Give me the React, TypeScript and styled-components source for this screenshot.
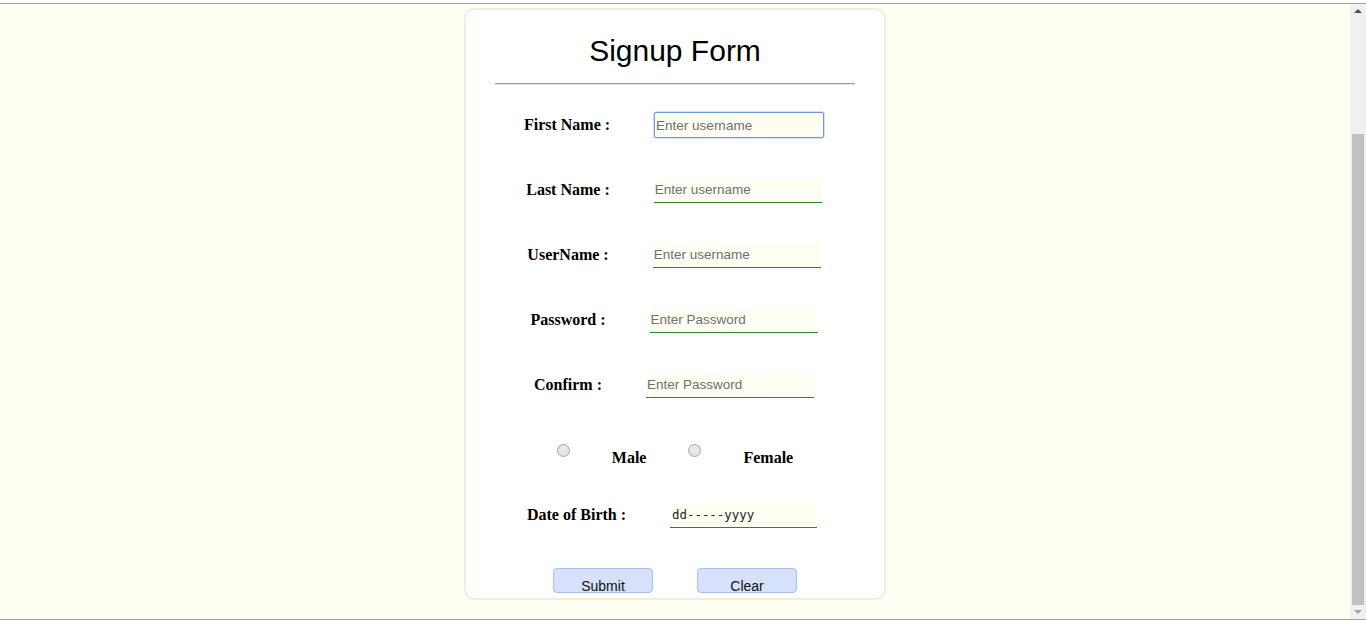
import React from "react";
import styled, { createGlobalStyle } from "styled-components";

const Global = createGlobalStyle`
  html, body { margin: 0; padding: 0; background: #ffffff; overflow: hidden; }
  * { box-sizing: border-box; }
`;

const Frame = styled.div`
  width: 1366px;
  height: 622px;
  display: flex;
  flex-direction: column;
  background: #ffffff;
`;

const Edge = styled.div<{ $top?: boolean }>`
  height: ${(p) => (p.$top ? "4px" : "3px")};
  background: #ffffff;
  border-${(p) => (p.$top ? "bottom" : "top")}: 1px solid #a3a3a3;
  flex: none;
`;

const Viewport = styled.div`
  flex: 1;
  display: flex;
  min-height: 0;
`;

const Page = styled.main`
  flex: 1;
  background: #fefef3;
  display: flex;
  justify-content: center;
  align-items: flex-start;
  padding-top: 4px;
`;

const Scrollbar = styled.div`
  width: 16px;
  flex: none;
  background: #f0f0f0;
  display: flex;
  flex-direction: column;
  align-items: center;
`;

const Arrow = styled.div<{ $down?: boolean }>`
  height: 14px;
  width: 100%;
  display: flex;
  align-items: center;
  justify-content: center;
  &::before {
    content: "";
    border-left: 4px solid transparent;
    border-right: 4px solid transparent;
    ${(p) =>
      p.$down
        ? "border-top: 4px solid #a3a3a3;"
        : "border-bottom: 4px solid #505050;"}
  }
`;

const TrackSpace = styled.div`
  flex: 1;
  width: 100%;
  display: flex;
  flex-direction: column;
  align-items: center;
  padding-top: 116px;
`;

const Thumb = styled.div`
  width: 12px;
  flex: 1;
  background: #c1c1c1;
`;

const Card = styled.section`
  width: 422px;
  height: 592px;
  background: #ffffff;
  border: 2px solid #f7ebe0;
  border-radius: 10px;
  display: flex;
  flex-direction: column;
  align-items: center;
  padding-top: 24px;
`;

const Title = styled.h1`
  margin: 0;
  font-family: "Liberation Sans", Arial, sans-serif;
  font-weight: normal;
  font-size: 30px;
  line-height: 34px;
  color: #000;
`;

const Rule = styled.hr`
  width: 360px;
  margin: 15px 0 0;
  border: none;
  border-top: 1px solid #9c9c9c;
  border-bottom: 1px solid #e4e4e4;
  height: 0;
`;

const Form = styled.form`
  margin-top: 27px;
  width: 100%;
  display: flex;
  flex-direction: column;
  gap: 39px;
`;

const Row = styled.div<{ $gap?: number; $top?: boolean; $shift?: number }>`
  height: 26px;
  display: flex;
  justify-content: center;
  align-items: ${(p) => (p.$top ? "flex-start" : "center")};
  gap: ${(p) => p.$gap ?? 44}px;
  padding-right: ${(p) => p.$shift ?? 0}px;
`;

const Label = styled.label<{ $offset?: number }>`
  font-family: "Liberation Serif", "Times New Roman", serif;
  font-weight: bold;
  font-size: 16px;
  line-height: 18px;
  color: #000;
  white-space: nowrap;
  margin-top: ${(p) => p.$offset ?? 0}px;
`;

const Field = styled.input<{ $focused?: boolean; $w?: number }>`
  width: ${(p) => (p.$focused ? 170 : p.$w ?? 168)}px;
  height: ${(p) => (p.$focused ? 26 : 25)}px;
  margin: 0;
  padding: 0 1px;
  background: #fefef3;
  font-family: "Liberation Sans", Arial, sans-serif;
  font-size: 13.5px;
  color: #222;
  outline: none;
  border: none;
  border-radius: ${(p) => (p.$focused ? "2px" : "0")};
  ${(p) =>
    p.$focused
      ? "border: 1px solid #6c9bd6; box-shadow: 0 0 0 0.5px #a9c4ea;"
      : "border-bottom: 1px solid #2c862c;"}
  &::placeholder {
    color: #6f6f6f;
  }
`;

const DateField = styled(Field)`
  font-family: "DejaVu Sans Mono", "Liberation Mono", monospace;
  font-size: 12.4px;
  padding-left: 2px;
  &::placeholder {
    color: #222;
  }
`;

const Radio = styled.input`
  appearance: none;
  width: 13px;
  height: 13px;
  margin: 7px 0 0;
  border-radius: 50%;
  border: 1px solid #a6a6a6;
  background: radial-gradient(circle at 50% 40%, #ececec 0%, #dcdcdc 100%);
`;

const Button = styled.button`
  width: 100px;
  height: 25px;
  margin-top: 1px;
  padding: 9px 0 0;
  background: #d6e1fb;
  border: 1px solid #a9bdee;
  border-radius: 4px;
  font-family: "Liberation Sans", Arial, sans-serif;
  font-size: 14px;
  line-height: 16px;
  color: #111;
  overflow: visible;
`;

const textFields = [
  { label: "First Name :", placeholder: "Enter username", focused: true },
  { label: "Last Name :", placeholder: "Enter username" },
  { label: "UserName :", placeholder: "Enter username" },
  { label: "Password :", placeholder: "Enter Password", type: "password" },
  { label: "Confirm :", placeholder: "Enter Password", type: "password" },
];

export default function App() {
  return (
    <Frame>
      <Global />
      <Edge $top />
      <Viewport>
        <Page>
          <Card>
            <Title>Signup Form</Title>
            <Rule />
            <Form onSubmit={(e) => e.preventDefault()}>
              {textFields.map((f) => (
                <Row key={f.label} $shift={2}>
                  <Label>{f.label}</Label>
                  <Field
                    $focused={f.focused}
                    type={f.type ?? "text"}
                    placeholder={f.placeholder}
                  />
                </Row>
              ))}
              <Row $top $gap={42}>
                <Radio type="radio" name="gender" />
                <Label $offset={12}>Male</Label>
                <Radio type="radio" name="gender" />
                <Label $offset={12}>Female</Label>
              </Row>
              <Row $shift={6}>
                <Label>Date of Birth :</Label>
                <DateField $w={147} placeholder="dd-----yyyy" />
              </Row>
              <Row>
                <Button type="submit">Submit</Button>
                <Button type="reset">Clear</Button>
              </Row>
            </Form>
          </Card>
        </Page>
        <Scrollbar>
          <Arrow />
          <TrackSpace>
            <Thumb />
          </TrackSpace>
          <Arrow $down />
        </Scrollbar>
      </Viewport>
      <Edge />
    </Frame>
  );
}
